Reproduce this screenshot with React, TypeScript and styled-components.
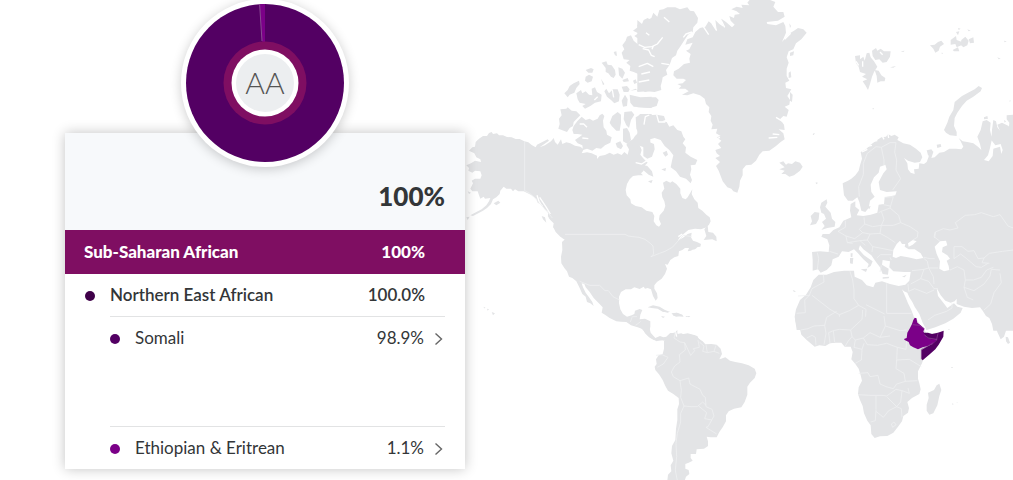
import React from "react";
import styled, { createGlobalStyle } from "styled-components";

const GlobalStyle = createGlobalStyle`
  * { box-sizing: border-box; }
  body {
    margin: 0;
    background: #fff;
    color: #333638;
    font-family: Lato, "Liberation Sans", sans-serif;
    font-size: 17px;
    line-height: 20px;
  }
`;

const Page = styled.main`
  position: relative;
  min-height: 100vh;
  overflow: hidden;
`;

const MapLayer = styled.svg`
  position: absolute;
  inset: 0;
  width: 100%;
  height: 100%;
`;

const Panel = styled.section`
  position: relative;
  width: 400px;
  max-width: 100%;
  margin-left: 65px;
  display: flex;
  flex-direction: column;
  align-items: center;
`;

const Chart = styled.div`
  position: relative;
  z-index: 1;
  flex: none;
  width: 168px;
  height: 168px;
  margin: -1px 0 -34px;
  border-radius: 50%;
  background: #fff;
  box-shadow: 0 2px 12px rgba(0, 0, 0, 0.2);
  display: grid;
  place-items: center;

  > * { grid-area: 1 / 1; }
`;

const Initials = styled.span`
  padding-bottom: 2px;
  font-size: 30px;
  line-height: 32px;
  font-weight: 300;
  color: #555;
`;

const Card = styled.div`
  width: 100%;
  background: #fff;
  box-shadow: 0 0 12px rgba(0, 0, 0, 0.24);
`;

const Total = styled.header`
  height: 97px;
  padding: 0 20px 18px;
  display: flex;
  align-items: flex-end;
  justify-content: flex-end;
  background: #f7f9fb;
  font-size: 26px;
  line-height: 32px;
  font-weight: 900;
`;

const Continent = styled.h2`
  margin: 0;
  height: 44px;
  padding: 0 40px 0 19px;
  display: flex;
  align-items: center;
  justify-content: space-between;
  background: #7f0e62;
  color: #fff;
  font-size: 17px;
  font-weight: 900;
`;

const Group = styled.h3`
  margin: 0;
  height: 42px;
  padding: 2px 40px 0 20px;
  display: flex;
  align-items: center;
  font-size: 17px;
  font-weight: 600;
`;

const Regions = styled.ul`
  margin: 0;
  padding: 0 20px 0 45px;
  list-style: none;
`;

const RegionItem = styled.li<{ $space?: boolean }>`
  border-top: 1px solid #e2e3e4;
  padding-bottom: ${(p) => (p.$space ? "67px" : "0")};
`;

const RegionButton = styled.button`
  width: 100%;
  height: 42px;
  padding: 2px 0 0;
  border: 0;
  background: none;
  color: inherit;
  font: inherit;
  display: flex;
  align-items: center;
  text-align: left;
  cursor: pointer;
`;

const Dot = styled.i<{ $color: string }>`
  flex: none;
  width: 10px;
  height: 10px;
  margin-right: 15px;
  border-radius: 50%;
  background: ${(p) => p.$color};
`;

const Name = styled.span`
  flex: 1;
  padding-bottom: 2px;
`;

const Share = styled.span`
  padding-bottom: 2px;
`;

const Chevron = styled.svg`
  flex: none;
  width: 9px;
  height: 14px;
  margin: 0 2px 0 10px;
`;

/* One part of the world, drawn in thirds of a map unit from its own origin. */
const Part = ({ x, y, land = "", water = "", borders = "", inlets = "", children }: {
  x: number; y: number; land?: string; water?: string; borders?: string; inlets?: string; children?: React.ReactNode;
}) => (
  <g transform={`translate(${x} ${y}) scale(${1 / 3})`}>
    <path d={land} fill="#e3e4e6" />
    <path d={water} fill="#fff" />
    <path d={inlets} fill="none" stroke="#fff" strokeWidth="4" strokeLinejoin="round" />
    <path d={borders} fill="none" stroke="#eff0f1" strokeWidth="2.4" strokeLinejoin="round" />
    {children}
  </g>
);

const WorldMap = () => (
  <MapLayer viewBox="0 0 1013 480" preserveAspectRatio="xMinYMin slice" aria-hidden="true">
    {/* North America */}
    <Part
      x={465}
      y={120}
      land="M12 92L22 82 30 80 32 66 42 56 54 48 66 48 72 39 80 36 84 42 96 40 102 46 114 46 126 51 140 52 152 57 164 57 178 64 190 67 200 75 212 82 216 74 232 66 248 58 252 62 238 72 224 82 240 76 258 64 266 54 270 66 278 74 288 58 292 72 304 67 316 70 330 77 346 80 356 88 350 100 366 97 380 100 396 107 396 117 404 108 420 105 434 98 446 104 458 100 470 105 478 96 488 104 492 88 484 74 494 64 504 58 514 66 524 76 530 90 526 104 534 114 542 122 548 128 540 136 536 152 528 160 534 166 520 166 504 168 494 178 486 192 482 210 485 226 496 238 498 250 512 258 530 262 544 272 562 276 568 288 566 304 574 316 582 320 588 312 582 298 584 286 596 272 601 258 598 244 592 232 590 218 598 206 594 188 604 182 616 188 622 184 634 192 646 206 646 220 652 234 662 238 668 232 676 218 682 208 680 222 688 238 698 248 700 264 712 272 724 284 734 292 737 304 732 314 724 322 708 328 690 326 670 330 660 338 646 350 638 362 656 352 668 342 680 338 678 352 684 362 696 366 708 372 706 380 692 382 678 392 668 394 672 384 660 384 652 390 642 394 640 408 628 412 616 420 608 434 600 432 606 446 600 462 590 476 576 486 568 496 568 506 576 520 578 534 572 542 564 528 558 508 548 504 540 506 536 500 524 507 508 502 498 508 482 508 468 516 462 530 462 550 466 568 474 582 486 590 500 586 508 582 510 572 524 567 532 570 526 584 524 598 540 596 556 604 556 620 553 634 560 646 572 656 584 654 604 650 604 660 580 662 566 660 552 652 540 640 534 628 518 622 498 616 484 606 468 605 454 604 434 594 420 584 410 578 413 562 400 548 386 534 374 516 362 502 358 492 350 490 354 502 362 518 372 532 382 546 386 558 376 550 366 546 362 530 352 522 344 504 334 484 322 474 312 470 306 454 298 444 289 430 288 410 292 390 291 366 300 358 288 350 272 332 264 322 266 310 256 300 248 290 250 276 238 268 232 256 218 248 214 236 200 226 188 220 176 214 160 214 150 208 144 214 138 206 124 206 116 200 106 212 104 222 94 232 84 238 78 252 66 264 54 272 40 280 24 288 16 286 34 276 50 268 64 256 72 244 76 234 60 236 56 230 46 236 42 226 38 214 22 214 16 206 24 190 20 182 30 176 46 176 50 166 46 154 30 152 22 158 10 152 12 144 4 136 18 130 30 122 48 126 46 118 34 112 28 100zM86 250L100 242 106 248 94 256zM4 292L14 290 8 300zM8 214L18 218 12 222zM230 288L240 292 244 308 234 298zM266 324L284 332 300 346 300 360 286 350 272 336zM718 328L728 316 730 336 744 338 754 350 755 364 742 358 716 360 724 348zM678 376L696 374 706 376 690 388 670 392zM548 562L564 556 584 560 600 570 616 576 594 576 578 566 560 564zM622 582L636 578 652 584 656 590 626 588zM588 588L600 590 594 594zM664 588L676 588 672 592zM80 576L90 580 84 586zM66 566L72 568 68 572zM56 560L62 564 57 565zM604 650L616 640 632 638 644 644 668 640 690 646 706 660H600z"
      inlets="M512 128L530 132 546 122 M224 232L244 262 256 282 M216 226L222 244 240 274 252 300 M640 350L652 342"
      borders="M179 64V212L194 220 208 232 222 248 244 272 262 294 M300 343H480L490 348 504 350 522 352 540 358 556 370 564 378 566 402 558 410 584 400 600 394 622 382 640 362 656 346 680 350 M344 484L374 496 404 496 420 512 430 512 444 530 464 540 M496 606L502 590 516 590 M512 616L528 604"
    />

    {/* Canadian Arctic */}
    <Part
      x={465}
      y={0}
      land="M286 328L304 326 308 322 320 332 334 334 346 346 334 358 326 366 324 378 314 384 306 396 296 392 280 386 284 372 282 356 290 346zM326 378L338 362 350 350 362 360 374 356 384 362 398 356 404 346 412 341 418 348 414 362 416 382 424 392 426 404 440 412 436 428 420 436 408 446 394 444 382 452 366 446 354 450 352 436 338 430 330 420 344 410 352 404 338 402 326 402 322 390zM298 280L308 270 314 258 326 250 342 242 344 252 334 264 328 278 314 284 308 292zM334 280L348 270 352 280 362 274 372 284 382 286 380 266 390 262 396 276 410 284 408 304 390 308 376 318 360 326 352 318 362 312 344 308 338 298zM362 230L372 224 384 230 380 244 368 248 360 242zM362 210L378 204 386 208 382 218 370 218zM410 188L424 184 428 194 440 196 450 210 452 224 446 234 438 230 430 220 422 216 422 204zM408 236L418 252 414 256zM460 202L472 206 480 218 472 236 462 226zM446 156L454 154 456 168 450 166zM418 274L424 266 432 280 444 268 458 268 464 284 462 304 448 310 438 300 426 290zM470 260L486 258 494 268 490 276 476 276zM472 240L488 234 492 244 476 246zM504 242L512 238 516 248 508 252zM470 302L480 284 488 298 486 318 474 320zM486 110L498 106 506 122 522 136 530 150 528 162 536 172 546 184 540 196 530 208 520 222 506 216 494 212 496 198 484 188 494 180 476 178 470 158 478 148 472 136 482 122zM504 92L518 82 516 74 530 74 536 60 548 54 560 62 560 138 544 136 532 128 536 116 520 116 508 108 520 100zM496 272L512 266 520 276 518 250 530 238 526 222 536 204 560 196V272L540 276 526 268zM494 284L510 288 526 292 560 290V324L530 322 506 320 496 308zM478 336L500 334 508 344 498 360 492 384 484 376 476 358zM434 368L442 348 458 336 468 344 468 368 464 392 454 392 446 384 440 378zM474 386L486 384 494 398 498 420 488 432 474 424zM452 430L466 424 474 438 468 448 456 442zM512 352L530 342 560 342V412L542 408 524 404 514 386zM500 424L510 408 520 398 540 406 556 418V446L546 456 536 442 520 436 514 452 504 442z"
      inlets="M344 372L356 372 366 382 M352 414L370 416 M528 344L526 372 534 392 M442 270L446 292 M398 290L388 300"
    />

    {/* Ellesmere, Baffin and Greenland */}
    <Part
      x={640}
      y={0}
      land="M-8 60L6 72 18 74 22 60 34 54 40 38 52 50 58 30 70 28 82 22 106 22 120 28 142 22 150 32 162 34 174 54 172 68 160 82 158 96 144 104 132 122 122 138 112 152 108 166 96 174 92 186 88 196 78 210 82 224 68 232 66 244 62 258 64 270 44 276 22 274 -8 276zM-8 300L10 298 20 292 48 292 56 300 50 318 30 324 -8 322zM-8 352L0 342 16 342 26 346 50 344 72 348 76 360 66 364 80 366 88 380 100 376 112 390 124 394 130 410 136 418 128 430 138 442 136 458 152 470 172 480 166 494 152 496 154 508 150 524 156 540 152 550 138 536 120 530 108 514 92 502 96 482 100 466 88 450 74 438 62 420 44 414 22 420 -8 418zM10 436L22 424 42 432 44 448 36 470 22 476 10 468zM68 458L80 452 84 464 76 470zM64 508L78 504 76 514zM8 494L22 498 36 514 40 530 26 524 12 512zM24 544L38 540 34 550zM180 84L166 96 158 112 142 118 136 134 158 128 148 148 138 152 152 162 148 176 150 188 132 192 116 206 102 214 100 226 110 236 130 236 138 240 128 250 112 252 124 258 116 266 136 266 146 274 126 284 142 286 160 280 180 286 194 296 198 312 208 322 206 336 214 348 212 362 218 374 214 388 232 386 228 400 242 408 230 412 244 422 234 432 244 444 226 450 230 460 240 468 226 474 240 486 228 498 236 512 242 528 248 544 262 562 274 566 280 574 292 578 298 560 300 542 308 526 308 508 318 496 334 494 348 482 358 464 368 454 388 452 408 438 422 426 434 418 430 400 416 388 434 390 432 374 420 358 430 348 440 350 446 330 434 320 448 314 450 300 442 288 454 268 438 264 436 248 448 242 440 228 440 206 446 188 440 172 446 154 460 148 468 130 484 118 500 98 490 88 474 84 462 92 452 98 442 108 426 126 438 98 436 78 430 66 408 76 382 72 380 66 414 62 434 50 430 36 414 36 400 20 406 6 380 -4H332L322 8 328 16 304 14 308 24 290 20 274 28 290 34 300 42 284 44 282 54 268 48 272 62 284 74 276 82 258 66 244 56 250 80 238 72 226 60 230 90 216 72 206 64 196 80zM450 158L462 154 460 166 450 168zM446 218L452 214 454 232 446 234zM450 276L458 284 456 306 450 302zM448 70L453 78 450 84zM518 402L525 400 521 405zM418 488L430 484 438 494 444 490 456 492 466 484 480 488 488 500 480 512 462 526 448 530 436 522 424 522 434 512 418 508 434 502z"
      inlets="M-4 134L14 142 36 140 52 132 68 112 M40 138L36 148 M8 146L26 150 34 166 44 170 M18 98L28 106 M88 66L72 52 M156 96L138 102 130 112 M64 190L88 194 M-4 200L22 190 40 200 M4 222L30 216 M-4 246L28 240 M190 80L206 104 M216 70L230 92 M244 62L254 82 M12 374L16 350 28 345 M50 344L56 366 76 366 M220 420L240 412 M386 414L412 412 M398 402L418 404 M408 352L428 364 M434 118L452 100 M70 440L80 450"
    />

    {/* South America */}
    <Part
      x={640}
      y={310}
      land="M0 36L14 34 30 38 28 52 32 68 46 84 60 78 70 82 72 92 62 88 50 94 40 88 22 74 14 66 0 50zM72 92L82 78 90 70 104 68 112 60 112 72 124 70 136 76 154 74 172 78 176 86 188 94 196 103 214 102 230 104 242 116 246 132 238 148 256 142 270 152 286 156 306 160 326 166 344 176 349 190 344 204 330 218 322 230 322 254 314 276 304 292 282 296 266 304 258 316 258 334 248 352 238 366 230 382 212 382 200 380 204 394 204 408 192 416 170 418 168 432 152 432 152 444 158 452 146 458 136 462 136 476 146 480 148 492 138 500 134 512H82L84 494 94 484 92 466 100 452 94 430 96 408 106 390 108 356 112 330 112 298 117 282 116 264 100 252 84 242 76 228 68 210 58 194 46 180 44 170 50 162 48 148 56 136 68 132 72 116zM94 10L110 8 128 16 108 20zM64 0L80 4 88 10 74 6zM136 18H144L140 21z"
      inlets="M106 64L110 80 M244 144L252 138"
      borders="M106 66L102 84 120 96 134 98 136 120 118 134 120 156 104 168 94 186 100 200 120 212 146 204 150 222 180 238 188 256 196 262 198 290 216 298 222 318 204 350 198 352 230 372 M120 212L124 240 122 262 132 288 154 290 172 290 188 276 198 286 M132 288L122 310 122 336 112 370 108 400 110 440 106 480 112 512 M48 136L66 134 84 142 70 162 52 172 M134 98L152 136 164 122 160 116 178 112 174 90 M178 96L192 108 188 124 202 128 198 104 M202 128L222 124 228 106 M222 124L238 130 M176 288L200 308 194 326 216 330"
    />

    {/* Europe, North Africa and Asia */}
    <Part
      x={780}
      y={180}
      land="M188 10L204 2 214 -4 226 -14 236 -28 240 -44 246 -64 242 -84 258 -92 270 -104 286 -116 304 -128 318 -130 324 -138 334 -132 344 -136 356 -128 352 -120 370 -110 390 -106 408 -94 422 -82 427 -68 420 -54 404 -52 384 -58 372 -66 382 -50 384 -32 392 -22 404 -18 402 -32 416 -34 418 -50 432 -48 440 -54 446 -70 444 -90 454 -92 460 -84 454 -66 464 -68 478 -82 492 -84 508 -94 528 -94 544 -92 550 -100 542 -116 536 -126 548 -116 562 -114 580 -110 594 -100 604 -90 600 -108 592 -130 602 -150 608 -176 620 -180 632 -172 630 -150 636 -124 630 -96 624 -74 612 -60 626 -56 638 -72 640 -94 660 -100 664 -78 668 -90 662 -108 646 -104 634 -120 636 -150 640 -180 648 -176 652 -158 660 -148 652 -166 666 -172 686 -162 690 -150 700 -140V452H640L636 432 628 414 618 408 608 392 600 382 576 384 552 380 530 372 530 356 524 364 512 368 496 362 482 346 470 324 474 348 490 368 502 384 522 370 532 380 548 384 542 398 520 416 496 430 466 442 440 450H50L44 410 48 388 60 360 78 344 92 322 100 300 116 284 140 284 162 276 192 272 222 272 224 290 246 300 260 316 280 322 286 308 306 304 330 312 356 318 376 314 388 302 392 276 374 276 340 274 328 262 330 244 308 240 306 254 326 266 324 284 308 282 300 262 288 246 274 226 250 208 240 196 236 208 252 226 278 244 272 258 262 264 266 252 250 238 234 220 222 208 206 216 186 214 176 230 158 238 154 256 140 270 122 278 114 268 98 272 98 240 96 216 120 214 146 216 148 196 142 178 124 170 128 162 148 162 160 150 178 142 190 122 214 112 210 92 212 72 226 64 226 80 238 90 230 106 250 108 272 104 292 98 296 74 312 72 314 52 346 46 350 34 320 36 300 30 296 6 310 -20 320 -32 316 -46 300 -40 296 -22 282 -8 272 14 274 36 284 50 270 62 266 84 256 96 244 92 238 66 232 52 218 62 204 62 192 46zM124 68L140 58 142 68 136 80 152 98 156 116 166 126 164 140 142 144 124 150 134 138 126 126 138 116 132 102 124 98 120 82zM92 108L104 96 118 98 116 118 108 132 90 136 96 124zM212 220L218 220 217 232 212 230zM210 234L220 234 218 252 210 250zM242 268L262 266 258 276zM308 292L328 290 326 295 308 296zM366 290L380 284 374 292zM262 80L272 78 268 88zM106 8L113 7 110 12zM38 330L48 334 42 336zM492 -150L502 -172 508 -190 520 -210 524 -234 546 -252 564 -262 584 -272 596 -282 606 -276 602 -266 580 -250 560 -238 546 -222 532 -202 524 -186 522 -162 530 -144 530 -132 510 -134 498 -142zM470 -106L482 -108 484 -100 472 -96zM440 -90L460 -86 456 -72 444 -74zM612 -188L622 -192 624 -184 612 -182zM680 -194L700 -196V-140L686 -150 688 -172 680 -182zM672 -180L678 -176 674 -172z"
      water="M338 230L340 210 350 192 360 182 366 192 376 192 374 200 386 208 404 208 422 220 430 234 410 238 384 232 362 228 348 234zM384 190L398 180 410 184 398 194 386 200zM464 200L480 184 498 182 502 196 488 202 486 216 502 226 510 236 500 242 506 258 508 270 492 274 478 266 480 244 470 222zM366 328L372 334 382 338 388 352 397 366 404 380 418 402 428 428 438 446 440 454 424 454 412 438 404 422 400 406 394 390 384 370 376 350z"
      borders="M238 50L236 20 250 -16 250 -50 262 -80 288 -100 304 -98 M304 -98L312 -60 312 -44 M304 -98L330 -112 348 -112 344 -84 350 -60 348 -30 362 -4 338 30 M314 52L340 50 330 84 304 94 296 98 M310 74L330 78 M252 112L254 132 278 140 304 136 312 118 304 94 M330 84L356 106 362 128 340 136 304 136 M196 122L196 142 174 154 198 168 202 188 218 190 M198 168L224 176 248 158 238 148 254 132 M202 188L240 182 256 196 M248 158L270 162 300 160 304 136 M270 162L262 180 240 182 M300 160L322 172 346 188 M262 180L278 200 300 204 338 212 M278 200L276 216 M290 234L302 224 334 224 M362 128L390 140 414 156 412 172 398 180 M148 214L174 222 M112 218L116 236 112 268 M334 240L330 232 M432 232L450 236 464 236 M430 234L442 244 446 264 474 264 M396 272L432 268 446 264 M432 268L422 296 392 312 M422 296L446 304 462 326 474 326 M446 264L460 290 462 312 M464 174L466 156 490 146 510 150 534 144 526 128 556 106 584 104 604 98 640 110 660 104 684 138 700 144 M466 156L462 170 480 184 M522 236V200L546 200 564 214 582 212 594 236 612 234 628 220 668 214 700 210 M522 236L542 222 560 236 588 260 604 262 624 250 M510 270L532 260 552 270 556 300 552 322 562 352 M556 300L580 300 604 292 620 270 640 262 M612 234L606 248 628 250 M562 352L580 360 M552 322L582 332 612 312 630 288 634 268 660 270 M612 390L632 372 642 338 664 308 660 280 M130 284L132 306 96 326 88 346 54 348 M88 346L74 360 76 398 50 400 M96 346L150 388 178 404 208 392 236 376 258 388 M210 274L218 300 222 330 222 356 236 376 M320 310V400 M258 388L256 420 246 450 M178 404L180 424 140 434 136 450 M258 374L314 402 M320 400H394 M384 312L386 334 404 326 M404 326L440 340 462 330 M464 406L500 394 516 384 516 370 M444 420L464 406 M300 276L304 256"
    />

    {/* Africa, south of the Sahara */}
    <Part
      x={780}
      y={310}
      land="M46 20L46 32 50 46 60 58 64 74 80 90 104 110 118 106 136 108 150 100 168 98 184 98 194 110 212 110 218 126 214 148 226 162 236 176 242 196 246 212 236 232 234 252 240 270 248 288 252 310 262 332 272 346 274 372 284 384 300 379 322 378 340 368 354 350 366 334 370 318 384 308 387 294 382 276 396 264 418 252 422 238 418 220 414 206 414 184 426 160 430 148 460 114 484 80 491 64 470 68 440 72 434 60 420 44 408 24 400 20zM440 284L446 264 444 248 462 240 470 226 478 221 484 240 478 258 472 286 460 310 448 314 440 302zM677 80L684 82 690 98 684 102 678 94zM438 50L434 46 440 30H502L520 16 496 36 466 48 440 56zM642 30L644 36 652 66 662 88 672 80 680 56 678 36 690 22 700 16V30zM514 171H518V174H514zM516 280L521 282 518 285zM530 276L533 278 531 280zM504 57L511 58 506 60z"
      borders="M62 60L84 56 102 48 134 46 140 22 170 4 M80 84L96 76 106 82 108 106 M134 46L138 70 132 104 M150 100L146 68 160 62 164 96 M160 62L178 58 212 60 216 80 204 94 196 108 M212 60L246 28 248 0 M216 80L226 90 250 84 270 68 300 82 330 78 M226 90L222 112 246 118 252 100 M246 118L244 150 226 160 M250 84L262 104 292 106 320 100 352 112 378 118 380 92 M300 82L316 48 312 18 M316 48L360 62 380 60 M236 190L264 188 270 200 294 196 300 222 318 230 340 236 350 222 376 214 M352 112L350 150 348 176 372 190 376 214 412 212 M350 150L388 148 424 170 M234 254L270 256 306 256 320 258 348 238 366 242 362 276 350 290 322 262 M288 258V298L286 332 272 336 M288 304L310 322 326 302 350 290 364 296 366 322 M366 242L388 250 384 234 M334 342L342 336 348 344 338 352z"
    >
      <path d="M400 30L404 24 409 24 412 38 420 44 434 56 430 64 436 76 452 86 472 88 460 102 444 108 428 112 414 118 400 112 390 106 386 96 374 90 372 87 380 84 382 68 390 54 396 42z" fill="#7b0088" />
      <path d="M430 68L444 68 456 72 474 68 491 62 490 80 476 104 466 118 450 132 428 151 424 146 424 120 444 108 458 102 472 88 454 88 440 82z" fill="#530063" />
      <path d="M398 44L418 46 432 56 M434 76L446 84 470 88 474 70 M424 118L444 108 460 98 M424 118V148" fill="none" stroke="#8c4a96" strokeWidth="2" />
    </Part>

    {/* Svalbard and Franz Josef Land */}
    <Part
      x={780}
      y={20}
      land="M225 108L240 106 240 118 250 110 254 122 260 100 268 98 272 112 282 124 292 140 282 156 276 170 270 192 264 210 256 196 248 184 262 178 246 170 258 162 240 156 236 140 228 130zM276 92L288 84 292 92 302 86 312 94 332 94 330 110 320 126 308 128 298 118 286 120 278 108zM284 150L296 152 304 166 316 174 314 184 302 184 292 188 290 168zM362 94L374 92 370 96zM330 142L348 138 340 143zM450 76L464 74 474 66 484 62 492 72 480 80 476 92 466 98 460 86zM512 60L528 48 530 60 546 66 544 76 530 82 526 72 512 74zM528 36L538 34 534 46zM544 60L556 50 566 62 562 76 550 82 542 74zM566 58L580 52 582 68 570 70zM518 90L534 82 538 94 522 94zM562 28L572 32 566 34zM534 24L542 26 536 30zM484 98L490 99 486 102zM672 62L680 64 674 67zM652 112L662 116 656 118zM278 264H281V268H278zM98 342L104 340 100 345zM108 488L113 490 110 493zM688 242L692 241 690 246z"
      inlets="M228 124L236 136 M248 124L248 140 M308 104L300 96 M246 396L262 388 M258 380L276 376 M278 364L292 362 M306 346L312 358 M324 342L326 354"
    />
  </MapLayer>
);

const regions = [
  { name: "Somali", value: "98.9%", color: "#530063", space: true },
  { name: "Ethiopian & Eritrean", value: "1.1%", color: "#7b0088", space: false },
];

export default function App() {
  return (
    <Page>
      <GlobalStyle />
      <WorldMap />
      <Panel>
        <Chart>
          <svg width="168" height="168" viewBox="0 0 168 168" aria-hidden="true">
            <circle cx="84" cy="84" r="79" fill="#530063" />
            <path d="M84 84L78.6 5.2A79 79 0 0 1 84 5z" fill="#7b0088" />
            <path d="M81 42L78.6 5.2" stroke="#8b4a94" strokeWidth="1" />
            <circle cx="84" cy="84" r="41.5" fill="#7f0e62" />
            <circle cx="84" cy="84" r="33.5" fill="#fff" />
            <circle cx="84" cy="84" r="29" fill="#eceef0" />
          </svg>
          <Initials>AA</Initials>
        </Chart>
        <Card>
          <Total>100%</Total>
          <Continent>
            <span>Sub-Saharan African</span>
            <span>100%</span>
          </Continent>
          <Group>
            <Dot $color="#3f0049" />
            <Name>Northern East African</Name>
            <Share>100.0%</Share>
          </Group>
          <Regions>
            {regions.map((r) => (
              <RegionItem key={r.name} $space={r.space}>
                <RegionButton type="button">
                  <Dot $color={r.color} />
                  <Name>{r.name}</Name>
                  <Share>{r.value}</Share>
                  <Chevron viewBox="0 0 9 14" aria-hidden="true">
                    <path d="M1.5 1.5L7.5 7l-6 5.5" fill="none" stroke="#666" strokeWidth="1.4" />
                  </Chevron>
                </RegionButton>
              </RegionItem>
            ))}
          </Regions>
        </Card>
      </Panel>
    </Page>
  );
}
